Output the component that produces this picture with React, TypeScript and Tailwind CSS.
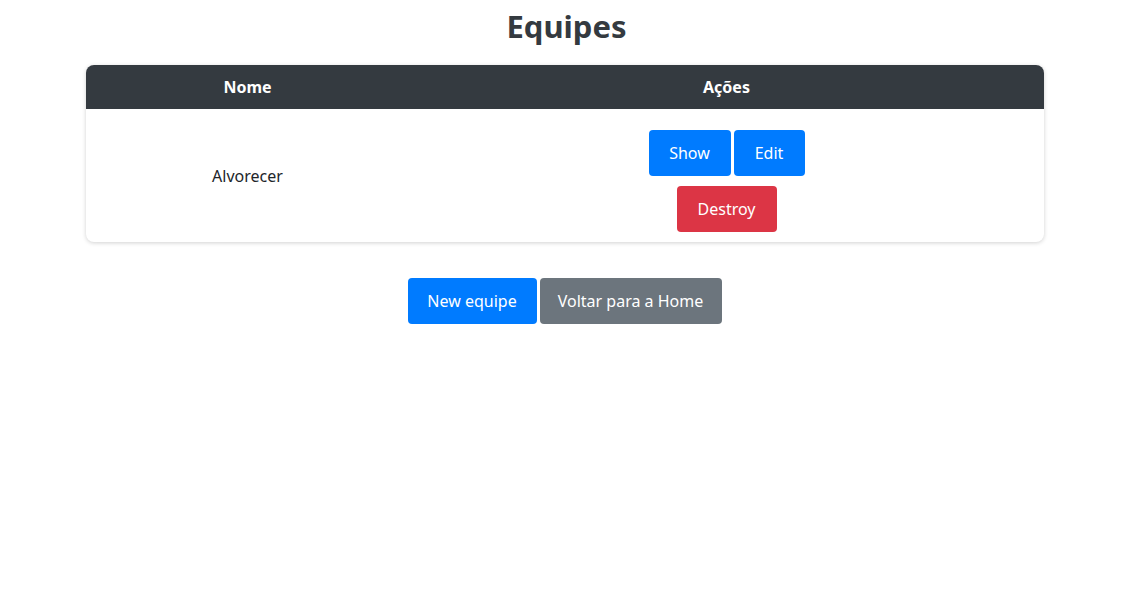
const equipes = [{ id: 1, nome: "Alvorecer" }];

export default function App() {
  return (
    <div className="min-h-screen bg-white text-[#212529]" style={{ fontFamily: '"Noto Sans", "Open Sans", sans-serif' }}>
      {/* Title */}
      <h1 className="pt-[7px] text-center text-[31px] font-bold leading-[38px] text-[#343a40]">Equipes</h1>

      {/* Table card */}
      <div className="mx-auto mt-[20px] w-[958px] -translate-x-[2px] overflow-hidden rounded-lg bg-white shadow-[0_1px_4px_rgba(0,0,0,0.18)]">
        <div className="flex h-[44px] items-center bg-[#343a40] text-[16px] font-bold text-white">
          <div className="w-[324px] text-center">Nome</div>
          <div className="flex-1 text-center">Ações</div>
        </div>
        {equipes.map((e) => (
          <div key={e.id} className="flex h-[133px] items-center text-[16px]">
            <div className="w-[324px] text-center">{e.nome}</div>
            <div className="flex flex-1 flex-col items-center gap-[10px] pt-[11px]">
              <div className="flex gap-[3px]">
                <button className="h-[46px] w-[82px] rounded bg-[#007bff] text-white">Show</button>
                <button className="h-[46px] w-[71px] rounded bg-[#007bff] text-white">Edit</button>
              </div>
              <button className="h-[46px] w-[100px] rounded bg-[#dc3545] text-white">Destroy</button>
            </div>
          </div>
        ))}
      </div>

      {/* Footer actions */}
      <div className="mt-[36px] flex justify-center gap-[3px] -translate-x-[2px] text-[16px]">
        <button className="h-[46px] w-[129px] rounded bg-[#007bff] text-white">New equipe</button>
        <button className="h-[46px] w-[182px] rounded bg-[#6c757d] text-white">Voltar para a Home</button>
      </div>
    </div>
  );
}
